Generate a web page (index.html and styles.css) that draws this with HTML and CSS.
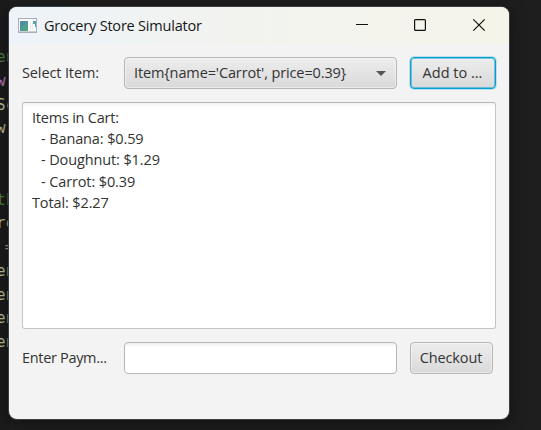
FILE: index.html
```html
<!DOCTYPE html>
<html lang="en">
<head>
<meta charset="utf-8">
<title>Grocery Store Simulator</title>
<link rel="stylesheet" href="styles.css">
</head>
<body>
<div class="editor">
<div class="green">en</div><div class="purple">w</div><div>Sc</div><div>w<span class="blue">(</span></div><div></div><div></div><div class="green">th</div><div>re</div><div class="white">&nbsp;=</div><div>en</div><div>en</div><div>en</div><div>en</div>
</div>
<main class="window">
  <header class="titlebar">
    <svg class="app-icon" width="20" height="16" viewBox="0 0 20 16">
      <defs><linearGradient id="screen" x2="1" y2="1"><stop stop-color="#4b83b3"/><stop offset="1" stop-color="#55ad72"/></linearGradient></defs>
      <rect x=".5" y=".5" width="18" height="14" fill="#f8fafb" stroke="#a9afb8"/>
      <path d="M1 13.500h17" stroke="#cbd0d8"/>
      <rect x="2" y="3" width="8" height="10" fill="url(#screen)"/>
      <path d="M12.500 4v8M14.500 4v8" stroke="#e7ebef"/>
      <path d="M15 3h3v6h-1V6h-2z" fill="#59a3ad"/>
    </svg>
    <span class="title">Grocery Store Simulator</span>
    <svg class="controls" width="132" height="16" viewBox="0 0 132 16" fill="none" stroke="#111" stroke-width="1.200">
      <path d="M0 7.500h12"/><rect x="58.600" y="2.600" width="10.800" height="10.800" rx="1"/><path d="M117.300 2.300l11.400 11.400M128.700 2.300l-11.400 11.400"/>
    </svg>
  </header>
  <section class="content">
    <div class="row">
      <label class="select-label">Select Item:</label>
      <div class="combo"><span class="combo-text">Item{name='Carrot', price=0.39}</span><i class="arrow"></i></div>
      <button class="button focused"><span class="add-text">Add to ...</span></button>
    </div>
    <div class="cart">
      <p class="heading">Items in Cart:</p>
      <p class="item">- Banana: $0.59</p>
      <p class="item">- Doughnut: $1.29</p>
      <p class="item">- Carrot: $0.39</p>
      <p>Total: $2.27</p>
    </div>
    <div class="row">
      <label class="pay-label">Enter Paym...</label>
      <input class="field" type="text" aria-label="Payment">
      <button class="button checkout"><span class="check-text">Checkout</span></button>
    </div>
  </section>
</main>
</body>
</html>
```
FILE: styles.css
```css
* { box-sizing: border-box; }
body {
  margin: 0;
  width: 541px;
  height: 430px;
  overflow: hidden;
  display: flex;
  background: #1e1e1e;
  font: 14.500px/21px "Open Sans", sans-serif;
  letter-spacing: -0.120px;
  color: #333;
}
.editor {
  width: 9px;
  height: 430px;
  flex: none;
  padding-top: 45px;
  overflow: hidden;
  background: #1b1b1b;
  color: #cbcba0;
  font: 16px/23.750px "DejaVu Sans Mono", monospace;
  letter-spacing: 0;
  white-space: nowrap;
}
.editor div { height: 23.750px; margin-left: -4px; }
.editor .green { color: #528b45; }
.editor .purple { color: #c586d0; }
.editor .blue { color: #3385dc; }
.editor .white { color: #ccc; margin-left: -5px; }
.window {
  width: 500px;
  height: 412px;
  margin-top: 7px;
  border-radius: 8px;
  overflow: hidden;
  background: #f3f3f3;
  box-shadow: 0 0 0 1px #3b3e40, 0 3px 16px #111;
  flex: none;
}
.titlebar {
  height: 37px;
  display: flex;
  align-items: center;
  padding: 0 21px 0 9px;
  background: linear-gradient(90deg, #edf3f9, #f2f3ef 45%, #f4f4e9);
  color: #171717;
}
.app-icon { margin-right: 6px; }
.title { letter-spacing: -0.200px; white-space: nowrap; }
.controls { margin-left: auto; margin-top: -1px; }
.content { padding: 13px; }
.row { display: flex; height: 32px; align-items: center; }
label { width: 102px; flex: none; padding-bottom: 2px; white-space: nowrap; }
.pay-label { letter-spacing: -0.320px; }
.combo, .field {
  width: 273px;
  height: 32px;
  margin-right: 13px;
  border: 1px solid #b5b5b5;
  border-radius: 4px;
  flex: none;
}
.combo {
  display: flex;
  align-items: center;
  justify-content: space-between;
  padding: 0 10px 0 9px;
  background: linear-gradient(#ededed, #d9d9d9);
  box-shadow: inset 0 0 0 1px #ffffff70;
  white-space: nowrap;
}
.combo-text { padding-bottom: 2px; }
.arrow { border: 5px solid transparent; border-top-color: #555; border-bottom: 0; }
.button {
  width: 86px;
  height: 32px;
  padding: 0 1px 2px 0;
  border: 1px solid #b5b5b5;
  border-radius: 4px;
  background: linear-gradient(#ededed, #d9d9d9);
  box-shadow: inset 0 0 0 1px #ffffff70;
  color: #333;
  font: inherit;
  letter-spacing: -0.100px;
  white-space: nowrap;
}
.add-text { letter-spacing: 0; }
.focused { border-color: #039ed3; box-shadow: inset 0 0 0 1px #039ed380, 0 0 0 1px #039ed338; }
.checkout { width: 83px; }
.cart {
  width: 474px;
  height: 227px;
  margin: 13px 0;
  padding: 4px 9px;
  border: 1px solid #c5c5c5;
  border-top-color: #b5b5b5;
  border-radius: 3px;
  background: linear-gradient(#f3f3f3, #fff 4px);
}
.cart p { margin: 0; height: 21.200px; white-space: pre; }
.cart .heading { letter-spacing: -0.220px; }
.cart .item { padding-left: 9px; }
.field { padding: 0 8px; background: linear-gradient(#eee, #fff 4px); font: inherit; outline: 0; }
```
